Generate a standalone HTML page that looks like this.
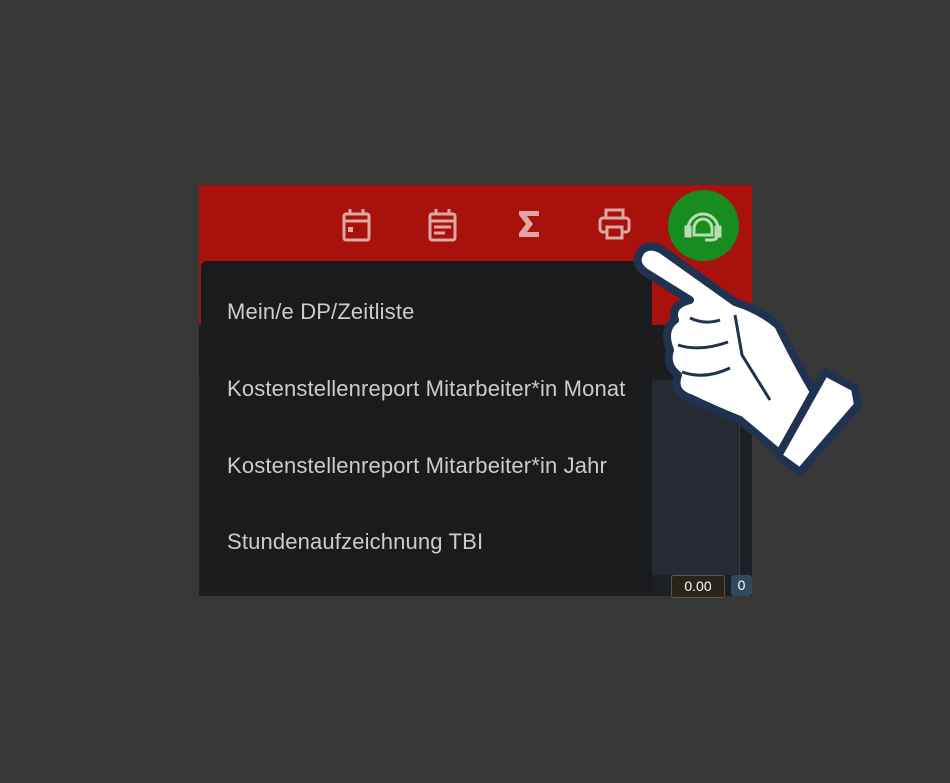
<!DOCTYPE html>
<html><head><meta charset="utf-8"><style>
body{margin:0;width:950px;height:783px;background:#373737;position:relative;overflow:hidden;font-family:"Liberation Sans",sans-serif}
.panel{position:absolute;left:199px;top:185px;width:553px;height:411px;background:#1c1f23;overflow:hidden}
.red{position:absolute;left:0;top:0;width:553px;height:140px;background:#a8110c}
.sub{position:absolute;left:0;top:140px;width:553px;height:52px;background:#1a1c1e}
.body2{position:absolute;left:440px;top:195px;width:100px;height:195px;background:#262a32;border-right:1px solid #3a3d42}
.ic{position:absolute;top:22px}
.green{position:absolute;left:469px;top:5px;width:71px;height:71px;border-radius:50%;background:#168d1e}
.menu{position:absolute;left:201px;top:261px;width:451px;height:333px;background:#191b1c;border-radius:6px}
.menu div{position:absolute;left:26px;color:#cccccc;font-size:22px;letter-spacing:0.15px}
.val{position:absolute;top:575px;height:21px;font-size:14px;color:#fff;border-radius:3px;text-align:center;line-height:21px}
</style></head><body>
<div class="panel">
<div class="red"></div><div class="sub"></div><div class="body2"></div>
<svg class="ic" style="left:140px" width="36" height="36" viewBox="0 0 36 36" fill="none" stroke="#dba8a4" stroke-width="3"><rect x="5" y="7" width="25" height="26" rx="2"/><line x1="5" y1="14" x2="30" y2="14"/><line x1="11" y1="2" x2="11" y2="8"/><line x1="24" y1="2" x2="24" y2="8"/><rect x="9" y="20" width="5" height="5" fill="#dba8a4" stroke="none"/></svg>
<svg class="ic" style="left:226px" width="36" height="36" viewBox="0 0 36 36" fill="none" stroke="#dba8a4" stroke-width="3"><rect x="5" y="7" width="25" height="26" rx="2"/><line x1="5" y1="14" x2="30" y2="14"/><line x1="11" y1="2" x2="11" y2="8"/><line x1="24" y1="2" x2="24" y2="8"/><line x1="9" y1="20" x2="26" y2="20"/><line x1="9" y1="26" x2="20" y2="26"/></svg>
<svg class="ic" style="left:318px;top:24px" width="26" height="30" viewBox="0 0 26 30"><path d="M2 2 H22 V7 H10 L16 15 L10 23 H22 V28 H2 V24 L9 15 L2 6Z" fill="#dba8a4"/></svg>
<svg class="ic" style="left:398px" width="36" height="36" viewBox="0 0 36 36" fill="none" stroke="#dba8a4" stroke-width="3"><rect x="9" y="3" width="17" height="8"/><rect x="3" y="11" width="29" height="14" rx="3"/><rect x="10" y="20" width="15" height="11" fill="#a8110c"/></svg>
<div class="green"></div>
<svg style="position:absolute;left:484px;top:22px" width="40" height="40" viewBox="0 0 40 40" fill="none" stroke="#b8ddb4" stroke-width="3"><path d="M5 22 A15 15 0 0 1 35 22"/><path d="M11 22 A9 10 0 0 1 29 22 V28 H11Z"/><rect x="3" y="20" width="4" height="9" fill="#b8ddb4"/><rect x="33" y="20" width="4" height="9" fill="#b8ddb4"/><path d="M34 29 Q34 33 28 33 H22"/></svg>
</div>
<div class="val" style="left:671px;width:52px;background:#2a2418;border:1px solid #555">0.00</div>
<div class="val" style="left:731px;width:21px;background:#2e4a5e">0</div>
<div class="menu">
<div style="top:38px">Mein/e DP/Zeitliste</div>
<div style="top:115px">Kostenstellenreport Mitarbeiter*in Monat</div>
<div style="top:192px">Kostenstellenreport Mitarbeiter*in Jahr</div>
<div style="top:268px">Stundenaufzeichnung TBI</div>
</div>
<svg style="position:absolute;left:0;top:0" width="950" height="783" viewBox="0 0 950 783">
<g fill="#fff" stroke="#1f3350" stroke-width="8" stroke-linejoin="round">
<path d="M642 250 Q632 262 645 272 L690 300 Q670 305 675 320 Q662 330 670 350 Q665 365 678 375 Q672 392 690 398 Q715 410 740 420 L785 458 L822 405 Q800 370 778 325 Q760 310 735 302 L662 250 Q650 243 642 250Z"/>
<path d="M778 456 L825 372 L855 388 L858 405 L800 472 Z"/>
</g>
<g fill="none" stroke="#1f3350" stroke-width="3">
<path d="M690 318 Q705 325 720 320"/><path d="M678 345 Q700 352 728 342"/><path d="M682 372 Q705 380 730 368"/><path d="M735 315 L742 355 L770 400"/>
</g>
</svg>
</body></html>
